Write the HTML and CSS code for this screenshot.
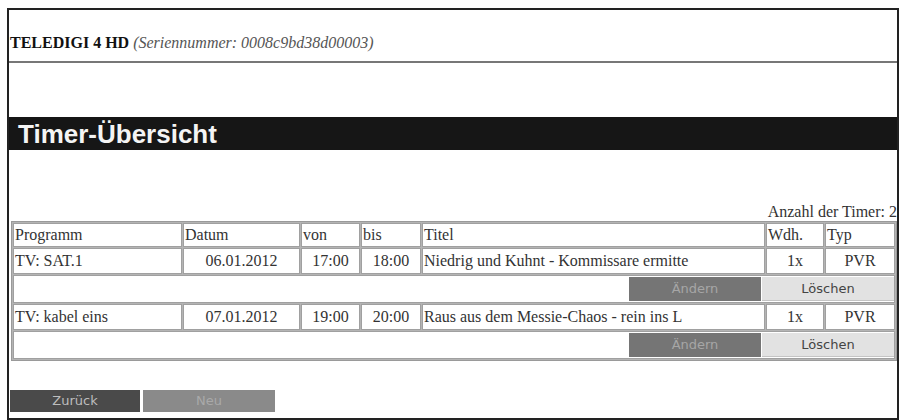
FILE: index.html
```html
<!DOCTYPE html>
<html lang="de">
<head>
<meta charset="utf-8">
<title>Timer-Übersicht</title>
<link rel="stylesheet" href="styles.css">
</head>
<body>
<div class="frame">
  <div class="device">
    <b>TELEDIGI 4 HD</b> <i>(Seriennummer: 0008c9bd38d00003)</i>
  </div>
  <div class="spacer"></div>
  <h1 class="title">Timer-Übersicht</h1>
  <div class="count">Anzahl der Timer: 2</div>
  <table class="timers">
    <colgroup>
      <col class="c-prog"><col class="c-date"><col class="c-from"><col class="c-to"><col class="c-title"><col class="c-rep"><col class="c-type">
    </colgroup>
    <tr class="head">
      <td>Programm</td><td>Datum</td><td>von</td><td>bis</td><td>Titel</td><td>Wdh.</td><td>Typ</td>
    </tr>
    <tr class="data">
      <td>TV: SAT.1</td><td class="ctr">06.01.2012</td><td class="ctr">17:00</td><td class="ctr">18:00</td><td>Niedrig und Kuhnt - Kommissare ermitte</td><td class="ctr">1x</td><td class="ctr">PVR</td>
    </tr>
    <tr class="actions">
      <td colspan="7"><div class="btns"><span class="btn edit">Ändern</span><span class="btn del">Löschen</span></div></td>
    </tr>
    <tr class="data">
      <td>TV: kabel eins</td><td class="ctr">07.01.2012</td><td class="ctr">19:00</td><td class="ctr">20:00</td><td>Raus aus dem Messie-Chaos - rein ins L</td><td class="ctr">1x</td><td class="ctr">PVR</td>
    </tr>
    <tr class="actions">
      <td colspan="7"><div class="btns"><span class="btn edit">Ändern</span><span class="btn del">Löschen</span></div></td>
    </tr>
  </table>
  <div class="footer">
    <span class="btn back">Zurück</span><span class="btn new">Neu</span>
  </div>
</div>
</body>
</html>
```
FILE: styles.css
```css
html, body {
  margin: 0;
  padding: 0;
  background: #fff;
}
body {
  font-family: "Liberation Serif", "Times New Roman", serif;
  font-size: 16px;
  color: #222;
}
.frame {
  margin: 8px 0 0 7px;
  width: 892px;
  height: 412px;
  box-sizing: border-box;
  border: 2px solid #222;
  display: flex;
  flex-direction: column;
}
.device {
  height: 53px;
  box-sizing: border-box;
  padding: 25px 0 0 1px;
  line-height: 16px;
  border-bottom: 2px solid #777;
  color: #333;
}
.device b { color: #111; }
.device i { color: #555; }
.spacer { height: 54px; }
.title {
  margin: 0;
  height: 33px;
  background: #161616;
  color: #f4f4f4;
  font-family: "Liberation Sans", Arial, sans-serif;
  font-weight: bold;
  font-size: 26px;
  line-height: 34px;
  padding-left: 9px;
}
.count {
  margin-top: 54px;
  line-height: 16px;
  text-align: right;
  color: #333;
}
.timers {
  margin: 1px 0 0 2px;
  width: 886px;
  box-sizing: border-box;
  border-collapse: separate;
  border-spacing: 1px;
  background: #b4b4b4;
  border: 1px solid #9a9a9a;
  table-layout: fixed;
}
.timers td {
  background: #fff;
  border: 1px solid #a0a0a0;
  padding: 0 1px;
  white-space: nowrap;
  overflow: hidden;
  color: #333;
  line-height: 18px;
}
.c-prog { width: 169px; }
.c-date { width: 117px; }
.c-from { width: 59px; }
.c-to { width: 60px; }
.c-title { width: auto; }
.c-rep { width: 58px; }
.c-type { width: 70px; }
.head td { height: 22px; }
.data td { height: 24px; }
.ctr { text-align: center; }
.actions td { height: 26px; padding: 0; }
.btns {
  display: flex;
  justify-content: flex-end;
  gap: 1px;
}
.btn {
  display: inline-block;
  height: 24px;
  line-height: 24px;
  text-align: center;
  font-family: "DejaVu Sans", Verdana, sans-serif;
  font-size: 13px;
}
.edit { width: 132px; background: #757575; color: #a6a6a6; }
.del { width: 132px; background: #e2e2e2; color: #444; box-shadow: inset 0 -1px 0 #c4c4c4; }
.footer {
  margin-top: 29px;
  padding-left: 1px;
  display: flex;
  gap: 3px;
}
.back { width: 130px; height: 22px; line-height: 22px; background: #4a4a4a; color: #bdbdbd; }
.new { width: 132px; height: 22px; line-height: 22px; background: #8a8a8a; color: #a9a9a9; }
```
